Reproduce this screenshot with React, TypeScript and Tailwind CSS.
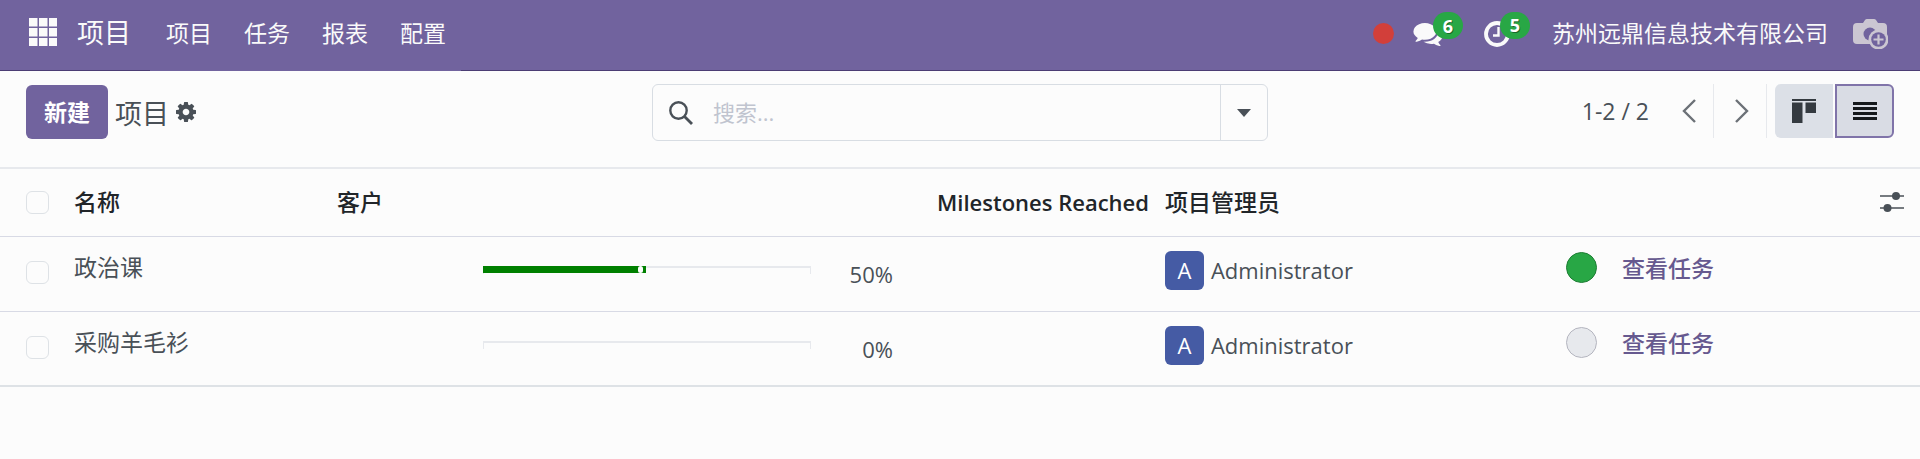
import React from "react";

const menu = ["项目", "任务", "报表", "配置"];

const rows = [
  { name: "政治课", progress: 50, manager: "Administrator", active: true },
  { name: "采购羊毛衫", progress: 0, manager: "Administrator", active: false },
];

function AppsIcon() {
  return (
    <svg viewBox="0 0 28 28" className="size-7" fill="#fafafa">
      {[0, 10, 20].map((y) =>
        [0, 10, 20].map((x) => <rect key={`${x}-${y}`} x={x} y={y} width="8.5" height="8.5" />)
      )}
    </svg>
  );
}

function CommentsIcon() {
  return (
    <svg viewBox="0 128 1792 1536" className="h-[25px] w-[30px]" fill="#fafafa">
      <path d="M1408 768q0 139-94 257t-256.500 186.500-353.500 68.500q-86 0-176-16-124 88-278 128-36 9-86 16h-3q-11 0-20.500-8t-11.500-21q-1-3-1-6.500t.5-6.500 2-6l2.500-5 3.500-5.500 4-5 4.500-5 4-4.500q5-6 23-25t26-29.500 22.500-29 25-38.500 20.500-44q-124-72-195-177t-71-224q0-139 94-257t256.500-186.500 353.500-68.500 353.500 68.500 256.500 186.500 94 257zm384 256q0 120-71 224.500t-195 176.500q10 24 20.500 44t25 38.500 22.500 29 26 29.500 23 25q1 1 4 4.500t4.500 5 4 5 3.500 5.500l2.500 5 2 6 .5 6.500-1 6.500q-3 14-13 22t-22 7q-50-7-86-16-154-40-278-128-90 16-176 16-271 0-472-132 58 4 88 4 161 0 309-45t264-129q125-92 192-212t67-254q0-77-23-152 129 71 204 178t75 230z" />
    </svg>
  );
}

function ClockIcon() {
  return (
    <svg viewBox="0 0 26 26" className="size-[26px]" fill="none" stroke="#fafafa">
      <circle cx="13" cy="13" r="11" strokeWidth="3.800" />
      <path d="M14.500 6v8.500H9" strokeWidth="2.400" />
    </svg>
  );
}

function CameraIcon() {
  return (
    <svg viewBox="0 0 35 30" className="h-[30px] w-[35px]">
      <path d="M4 4h6l2-3q.7-1 2-1h7q1.300 0 2 1l2 3h5q4 0 4 4v13q0 4-4 4H4q-4 0-4-4V8q0-4 4-4z" fill="#cbc6d2" />
      <circle cx="17" cy="15" r="6.500" fill="#71639e" />
      <circle cx="25.500" cy="20.500" r="10" fill="#cbc6d2" />
      <circle cx="25.500" cy="20.500" r="7.300" fill="#71639e" />
      <path d="M25.500 15.500v10M20.500 20.500h10" stroke="#cbc6d2" strokeWidth="2.200" />
    </svg>
  );
}

function GearIcon() {
  return (
    <svg viewBox="0 128 1536 1536" className="size-5" fill="#495057">
      <path d="M1024 896q0-106-75-181t-181-75-181 75-75 181 75 181 181 75 181-75 75-181zm512-109v222q0 12-8 23t-20 13l-185 28q-19 54-39 91 35 50 107 138 10 12 10 25t-9 23q-27 37-99 108t-94 71q-12 0-26-9l-138-108q-44 23-91 38-16 136-29 186-7 28-36 28h-222q-14 0-24.500-8.500t-11.500-21.500l-28-184q-49-16-90-37l-141 107q-10 9-25 9-14 0-25-11-126-114-165-168-7-10-7-23 0-12 8-23 15-21 51-66.500t54-70.500q-27-50-41-99l-183-27q-13-2-21-12.500t-8-23.500v-222q0-12 8-23t19-13l186-28q14-46 39-92-40-57-107-138-10-12-10-24 0-10 9-23 26-36 98.500-107.500t94.500-71.500q13 0 26 10l138 107q44-23 91-38 16-136 29-186 7-28 36-28h222q14 0 24.500 8.500t11.500 21.500l28 184q49 16 90 37l142-107q9-9 24-9 13 0 25 10 129 119 165 170 7 8 7 22 0 12-8 23-15 21-51 66.500t-54 70.500q26 50 41 98l183 28q13 2 21 12.500t8 23.500z" />
    </svg>
  );
}

function Badge({ children }: { children: React.ReactNode }) {
  return (
    <span className="absolute -top-[9px] -right-5 flex h-[27px] w-[30px] items-center justify-center rounded-full bg-[#28a745] text-[18px] leading-none font-bold text-white [text-shadow:1px_1px_0_rgba(0,0,0,0.4)]">
      {children}
    </span>
  );
}

function Checkbox({ label }: { label: string }) {
  return (
    <input
      type="checkbox"
      aria-label={label}
      className="block size-[23px] appearance-none rounded-[6px] border border-[#dee2e6] checked:bg-[#71639e]"
    />
  );
}

function Progress({ value }: { value: number }) {
  return (
    <div
      role="progressbar"
      aria-label="进度"
      aria-valuenow={value}
      className="h-2 w-[328px] border-x border-t-2 border-[#e7e9ed]"
    >
      {value > 0 && (
        <div className="-mt-[2px] -ml-px flex h-[7px] bg-[#008000]" style={{ width: `${value}%` }}>
          <span className="mr-[3px] ml-auto h-[7px] w-[5px] rounded-full bg-[#fcfcfc]" />
        </div>
      )}
    </div>
  );
}

function Navbar() {
  return (
    <header className="flex h-[71px] items-stretch bg-[#71639e] text-[23px] text-[#fafafa]">
      <div className="flex w-[150px] items-center border-b border-[#4b3d74] pl-[29px]">
        <button type="button" aria-label="应用" className="mr-5 -mt-[6px]">
          <AppsIcon />
        </button>
        <a href="#home" className="-mt-[3px] text-[27px] whitespace-nowrap">项目</a>
      </div>
      <nav className="flex w-[311px] items-center gap-8 pl-4">
        {menu.map((m) => (
          <a key={m} href={`#${m}`} className="-mt-1 whitespace-nowrap">{m}</a>
        ))}
      </nav>
      <div className="flex flex-1 items-center justify-end border-b border-[#4b3d74] pr-8 pb-[3px]">
        <span className="mr-[19px] size-[21px] rounded-full bg-[#d23f3a]" />
        <button type="button" aria-label="消息" className="relative mr-[41px]">
          <CommentsIcon />
          <Badge>6</Badge>
        </button>
        <button type="button" aria-label="活动" className="relative mr-[42px]">
          <ClockIcon />
          <Badge>5</Badge>
        </button>
        <a href="#company" className="mr-[25px]">苏州远鼎信息技术有限公司</a>
        <button type="button" aria-label="用户">
          <CameraIcon />
        </button>
      </div>
    </header>
  );
}

function ControlPanel() {
  return (
    <div className="grid grid-cols-[1fr_616px_1fr] items-start border-b-2 border-[#e7e9ed] px-[26px] pt-[13px] pb-[26px]">
      <div className="flex items-center pt-px">
        <button type="button" className="h-[54px] rounded-[6px] bg-[#71639e] px-[18px] text-[23px] font-bold text-white">
          新建
        </button>
        <h1 className="ml-[7px] pt-1 text-[27px] text-[#495057]">项目</h1>
        <button type="button" aria-label="操作" className="ml-[7px]">
          <GearIcon />
        </button>
      </div>

      <div className="flex h-[57px] rounded-[6px] border border-[#d8dde3]">
        <label className="flex flex-1 items-center gap-5 pl-4">
          <svg viewBox="0 0 24 24" className="size-6" fill="none" stroke="#495057">
            <circle cx="9.500" cy="9.500" r="8.200" strokeWidth="2.400" />
            <path d="M15.500 15.500l7.500 7.500" strokeWidth="2.800" />
          </svg>
          <input
            type="search"
            aria-label="搜索"
            placeholder="搜索..."
            className="min-w-0 flex-1 bg-transparent text-[22px] text-[#495057] outline-none placeholder:text-[#c0c4cf]"
          />
        </label>
        <button type="button" aria-label="筛选" className="flex w-[47px] items-center justify-center border-l border-[#d8dde3]">
          <svg viewBox="0 0 14 8" className="h-2 w-[14px]" fill="#495057">
            <path d="M0 0h14L7 8z" />
          </svg>
        </button>
      </div>

      <div className="flex h-[54px] items-stretch justify-end">
        <span className="mr-[15px] self-center text-[23px] whitespace-nowrap text-[#495057]">1-2 / 2</span>
        <button type="button" aria-label="上一页" className="flex w-[50px] items-center justify-center border-r border-[#e7e9ed]">
          <svg viewBox="0 0 14 24" className="h-6 w-[14px]" fill="none" stroke="#6c7177" strokeWidth="2.400">
            <path d="M13 1L2 12l11 11" />
          </svg>
        </button>
        <button type="button" aria-label="下一页" className="flex w-[53px] items-center justify-center border-r border-[#e7e9ed] pl-1">
          <svg viewBox="0 0 14 24" className="h-6 w-[14px]" fill="none" stroke="#6c7177" strokeWidth="2.400">
            <path d="M1 1l11 11L1 23" />
          </svg>
        </button>
        <button type="button" aria-label="看板" className="ml-2 flex w-[58px] items-center justify-center rounded-l-[6px] bg-[#dce0e7]">
          <svg viewBox="0 0 24 24" className="size-6" fill="#343a40">
            <path d="M0 0h24v2H0zM0 3.500h10.500V24H0zM13.500 3.500H24V14H13.500z" />
          </svg>
        </button>
        <button type="button" aria-label="列表" className="ml-[2px] flex w-[59px] items-center justify-center rounded-r-[6px] border-2 border-[#8074a9] bg-[#d9dce4]">
          <svg viewBox="0 0 24 18" className="h-[18px] w-6" fill="#16191c">
            <path d="M0 0h24v3H0zM0 5h24v3H0zM0 10h24v3H0zM0 15h24v3H0z" />
          </svg>
        </button>
      </div>
    </div>
  );
}

function ProjectTable() {
  return (
    <table className="w-full table-fixed border-collapse text-left text-[23px] leading-8 text-[#495057]">
      <colgroup>
        <col className="w-[74px]" />
        <col className="w-[13.7%]" />
        <col className="w-[7.6%]" />
        <col className="w-[340px]" />
        <col className="w-[342px]" />
        <col />
        <col className="w-[56px]" />
        <col className="w-[298px]" />
      </colgroup>
      <thead>
        <tr className="h-[67px] border-b border-[#d8dae5] text-[#212529]">
          <th className="pl-[26px] align-middle"><Checkbox label="全选" /></th>
          <th className="font-medium">名称</th>
          <th className="font-medium">客户</th>
          <th aria-label="进度" />
          <th className="pr-4 text-right text-[22px] font-semibold whitespace-nowrap">Milestones Reached</th>
          <th className="font-medium">项目管理员</th>
          <th aria-label="状态" />
          <th className="pr-4">
            <button type="button" aria-label="可选列" className="ml-auto block">
              <svg viewBox="0 0 24 22" className="h-[22px] w-6" fill="#495057">
                <path d="M0 4.300h24v1.400H0zM0 16.300h24v1.400H0z" />
                <circle cx="16" cy="5" r="4" />
                <circle cx="7.500" cy="17" r="4" />
              </svg>
            </button>
          </th>
        </tr>
      </thead>
      <tbody>
        {rows.map((r) => (
          <tr key={r.name} className="h-[75px] border-b border-[#d8dae5] align-top last:border-b-2 last:border-[#dee2e6]">
            <td className="pt-6 pl-[26px]"><Checkbox label={r.name} /></td>
            <td className="pt-[14px]">{r.name}</td>
            <td />
            <td className="pt-[29px]"><Progress value={r.progress} /></td>
            <td className="pt-[21px]">
              <div className="w-[70px] text-right text-[22px]">{r.progress}%</div>
            </td>
            <td className="pt-[14px]">
              <div className="flex items-center gap-[7px] text-[22px]">
                <span className="flex size-[39px] items-center justify-center rounded-[6px] bg-[#455ba4] text-white">A</span>
                {r.manager}
              </div>
            </td>
            <td className="pt-[15px]">
              <button
                type="button"
                aria-label="状态"
                className={
                  r.active
                    ? "block size-[31px] rounded-full border border-[#1e7e34] bg-[#28a745]"
                    : "block size-[31px] rounded-full border border-[#b4b5bf] bg-[#e7e9ed]"
                }
              />
            </td>
            <td className="pt-[15px]">
              <a href="#tasks" className="font-medium text-[#66598f]">查看任务</a>
            </td>
          </tr>
        ))}
      </tbody>
    </table>
  );
}

export default function App() {
  return (
    <div className="min-h-screen bg-[#fcfcfc] font-['Open_Sans','Noto_Sans_CJK_SC',sans-serif]">
      <Navbar />
      <main>
        <ControlPanel />
        <ProjectTable />
      </main>
    </div>
  );
}
